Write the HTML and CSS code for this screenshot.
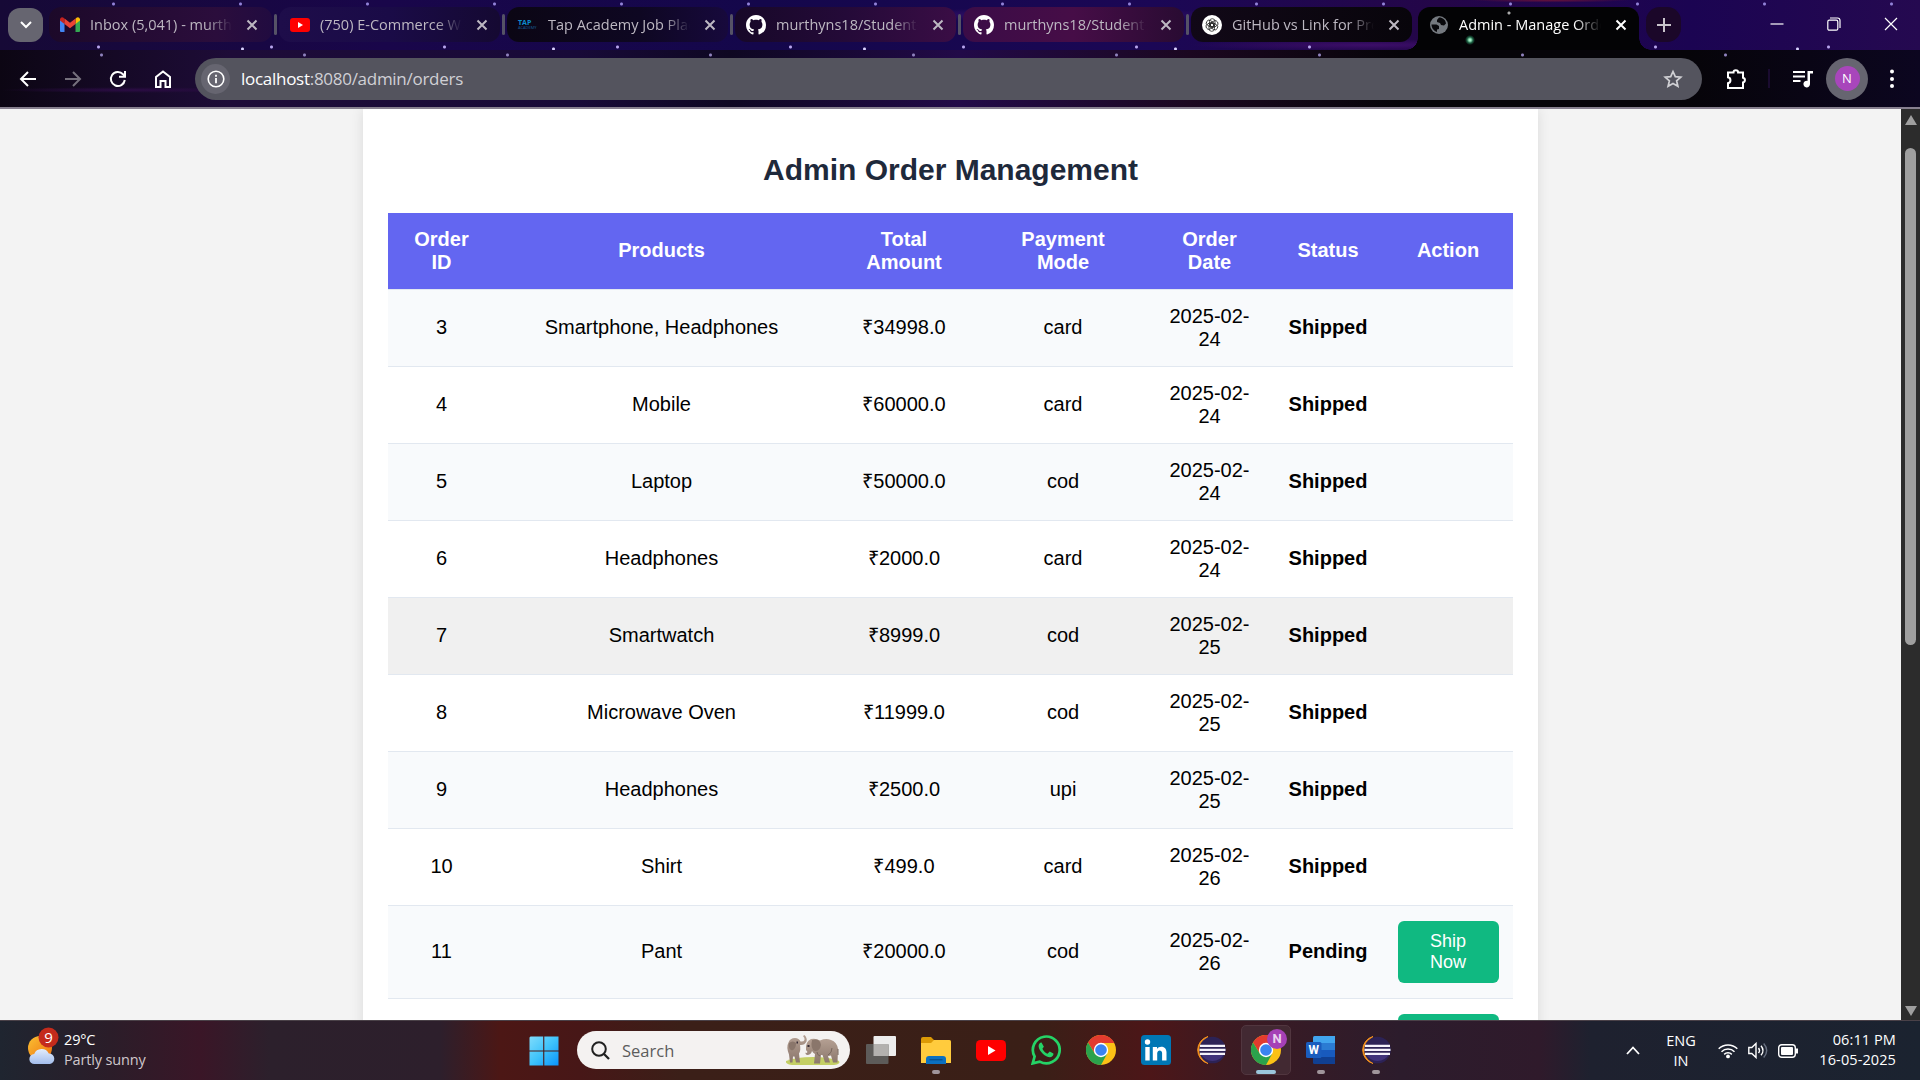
FILE: index.html
```html
<!DOCTYPE html>
<html lang="en">
<head>
<meta charset="utf-8">
<title>Admin - Manage Orders</title>
<link rel="stylesheet" href="styles.css">
</head>
<body>
<svg class="defs" width="0" height="0">
  <defs>
    <symbol id="x" viewBox="0 0 12 12"><path d="M1.500 1.500l9 9M10.500 1.500l-9 9" fill="none" stroke="currentColor" stroke-width="2"/></symbol>
    <symbol id="youtube" viewBox="0 0 30 21"><rect width="30" height="21" rx="4.500" fill="#f00"/><path d="M12 6v9l7.500-4.500z" fill="#fff"/></symbol>
    <symbol id="github" viewBox="0 0 16 16"><path fill="#fff" d="M8 0C3.580 0 0 3.580 0 8c0 3.540 2.290 6.530 5.470 7.590.4.070.55-.17.55-.38 0-.19-.01-.82-.01-1.490-2.010.37-2.530-.49-2.690-.94-.09-.23-.48-.94-.82-1.130-.28-.15-.68-.52-.01-.53.63-.01 1.080.58 1.230.82.72 1.210 1.870.87 2.330.66.070-.52.28-.87.510-1.070-1.780-.2-3.640-.89-3.640-3.950 0-.87.310-1.590.82-2.150-.08-.2-.36-1.020.08-2.120 0 0 .67-.21 2.200.82.64-.18 1.320-.27 2-.27s1.360.09 2 .27c1.530-1.040 2.200-.82 2.200-.82.44 1.100.16 1.920.08 2.120.51.56.82 1.270.82 2.150 0 3.070-1.870 3.750-3.650 3.950.29.25.54.73.54 1.480 0 1.070-.01 1.930-.01 2.200 0 .21.15.46.55.38A8.010 8.010 0 0 0 16 8c0-4.420-3.580-8-8-8z"/></symbol>
    <symbol id="chrome" viewBox="0 0 30 30"><circle cx="15" cy="15" r="15" fill="#fbc116"/><path d="M2 7.500A15 15 0 0 1 28.300 8H15L8.900 18.500z" fill="#e33b2e"/><path d="M2 7.500l6.900 11.250L21 19 15 30A15 15 0 0 1 2 7.500z" fill="#2ba24c"/><circle cx="15" cy="15" r="7.200" fill="#fff"/><circle cx="15" cy="15" r="5.800" fill="#3b83f0"/></symbol>
    <symbol id="eclipse" viewBox="0 0 30 30"><path d="M12 1.500A14 14 0 0 0 12 28.500 17 17 0 0 1 12 1.500z" fill="#f7941e" stroke="#f7941e" stroke-width="1"/><circle cx="16.500" cy="15" r="13.300" fill="#2c2255"/><path d="M5 19h23a13 13 0 0 1-23 0z" fill="#40337a"/><path d="M4 10.800h25M3.500 14.800h26M4 18.800h25" stroke="#f4f2fa" stroke-width="2.200"/></symbol>
  </defs>
</svg>

<header class="chrome">
  <div class="tabstrip">
    <button class="tab-search"><svg width="12" height="8" viewBox="0 0 12 8"><path d="M1 1l5 5 5-5" fill="none" stroke="#fff" stroke-width="2"/></svg></button>
    <div class="tab first"><span class="fav"><svg width="20" height="15" viewBox="0 0 20 15"><path d="M0 2.500V14q0 1 1 1h3.500V5.500z" fill="#4285f4"/><path d="M15.500 5.500V15H19q1 0 1-1V2.500z" fill="#34a853"/><path d="M15.500 1.800V7L20 3.500V2q-1.500-3.200-4.500-.2z" fill="#fbbc04"/><path d="M0 2v1.500L4.500 7V1.800Q1.500-1.200 0 2z" fill="#c5221f"/><path d="M4.500 1.600V7L10 11.200 15.500 7V1.600L10 5.800z" fill="#ea4335"/></svg></span><span class="tab-title">Inbox (5,041) - murthyns</span><svg class="close"><use href="#x"/></svg></div>
    <i class="sep"></i>
    <div class="tab blue"><span class="fav"><svg width="20" height="14"><use href="#youtube"/></svg></span><span class="tab-title">(750) E-Commerce Website</span><svg class="close"><use href="#x"/></svg></div>
    <i class="sep"></i>
    <div class="tab dark"><span class="fav tap"><b>TAP</b><small>ACADEMY</small></span><span class="tab-title">Tap Academy Job Placement</span><svg class="close"><use href="#x"/></svg></div>
    <i class="sep"></i>
    <div class="tab plum"><span class="fav"><svg width="20" height="20"><use href="#github"/></svg></span><span class="tab-title">murthyns18/Student-M</span><svg class="close"><use href="#x"/></svg></div>
    <i class="sep"></i>
    <div class="tab wine"><span class="fav"><svg width="20" height="20"><use href="#github"/></svg></span><span class="tab-title">murthyns18/Student-M</span><svg class="close"><use href="#x"/></svg></div>
    <i class="sep"></i>
    <div class="tab black"><span class="fav"><svg width="20" height="20" viewBox="0 0 20 20"><circle cx="10" cy="10" r="10" fill="#fff"/><g fill="none" stroke="#222" stroke-width=".8"><rect x="7.500" y="3.700" width="5.500" height="8" rx="2.700"/><rect x="7.500" y="3.700" width="5.500" height="8" rx="2.700" transform="rotate(60 10 10)"/><rect x="7.500" y="3.700" width="5.500" height="8" rx="2.700" transform="rotate(120 10 10)"/><rect x="7.500" y="3.700" width="5.500" height="8" rx="2.700" transform="rotate(180 10 10)"/><rect x="7.500" y="3.700" width="5.500" height="8" rx="2.700" transform="rotate(240 10 10)"/><rect x="7.500" y="3.700" width="5.500" height="8" rx="2.700" transform="rotate(300 10 10)"/></g></svg></span><span class="tab-title">GitHub vs Link for Project</span><svg class="close"><use href="#x"/></svg></div>
    <i class="sep none"></i>
    <div class="tab active"><span class="fav"><svg width="18" height="18" viewBox="0 0 18 18"><circle cx="9" cy="9" r="9" fill="#74797f"/><path d="M9 1.500L7 4v2l3 1 1 2 3 .5 2-2C15.500 4 13 1.500 9 1.500zM1.500 8.500h5L9 10v3l-2 .5V16C4 15 1.500 12 1.500 8.500z" fill="#08080b"/></svg></span><span class="tab-title">Admin - Manage Orders</span><svg class="close"><use href="#x"/></svg></div>
    <button class="new-tab"><svg width="14" height="14"><path d="M7 0v14M0 7h14" stroke="#c9c4cc" stroke-width="2"/></svg></button>
    <div class="window-buttons">
      <svg width="14" height="14"><path d="M.5 7h13" stroke="#fff" stroke-width="1.200"/></svg>
      <svg width="14" height="14" fill="none" stroke="#fff" stroke-width="1.200"><rect x=".8" y="3.200" width="10" height="10" rx="1.500"/><path d="M3 1h7.500q2.500 0 2.500 2.500V11"/></svg>
      <svg width="14" height="14"><path d="M1 1l12 12M13 1L1 13" stroke="#fff" stroke-width="1.200"/></svg>
    </div>
  </div>
  <div class="toolbar">
    <nav class="nav">
      <svg viewBox="0 0 18 18"><path d="M17 9H2M9 2L2 9l7 7" /></svg>
      <svg viewBox="0 0 18 18" class="dim"><path d="M1 9h15M9 2l7 7-7 7"/></svg>
      <svg viewBox="0 0 18 18"><path d="M15.800 10A7 7 0 1 1 14 4.200L15.500 6M16 1v5.800h-6"/></svg>
      <svg viewBox="0 0 18 18"><path d="M2 17V7l7-5.500L16 7v10h-4.500v-6h-5v6z"/></svg>
    </nav>
    <div class="address">
      <span class="info"><svg width="18" height="18" viewBox="0 0 18 18"><circle cx="9" cy="9" r="7.800" fill="none" stroke="#fff" stroke-width="1.600"/><path d="M9 8v5.200M9 4.800v1.900" stroke="#fff" stroke-width="1.800"/></svg></span>
      <span class="url"><span>localhost</span>:8080/admin/orders</span>
      <svg class="star" width="20" height="20" viewBox="0 0 20 20"><path d="M10 2.500l2.300 5.100 5.500.5-4.200 3.700 1.300 5.500L10 14.400l-4.900 2.900 1.300-5.500-4.200-3.700 5.500-.5z" fill="none" stroke="#d0d0d4" stroke-width="1.700"/></svg>
    </div>
    <div class="tools">
      <svg class="puzzle" width="22" height="22" viewBox="0 0 22 22"><path d="M2 4.500h5.500a2.300 2.300 0 0 1 4.600 0H17v5.200a2.400 2.400 0 0 1 0 4.700V20H2v-4.800a3 3 0 0 0 0-5.900z" fill="none" stroke="#fff" stroke-width="2"/></svg>
      <i class="rule"></i>
      <svg class="music" width="20" height="18" viewBox="0 0 20 18"><path d="M0 2h12M0 6.500h12M0 11h7.500" stroke="#fff" stroke-width="2"/><path d="M14.500 1H20v2.500h-3V14a3.300 3.300 0 1 1-2.500-3.100z" fill="#fff"/></svg>
      <span class="profile"><span>N</span></span>
      <svg class="kebab" width="6" height="20" fill="#fff"><circle cx="3" cy="2.500" r="2"/><circle cx="3" cy="10" r="2"/><circle cx="3" cy="17" r="2"/></svg>
    </div>
  </div>
</header>

<div class="viewport">
  <main class="page">
    <section class="container">
      <h2>Admin Order Management</h2>
      <table class="orders">
        <colgroup><col class="c-id"><col class="c-products"><col class="c-total"><col class="c-payment"><col class="c-date"><col class="c-status"><col class="c-action"></colgroup>
        <thead><tr><th>Order<br>ID</th><th class="single">Products</th><th>Total<br>Amount</th><th>Payment<br>Mode</th><th>Order<br>Date</th><th class="single">Status</th><th class="single">Action</th></tr></thead>
        <tbody>
          <tr><td>3</td><td>Smartphone, Headphones</td><td>₹34998.0</td><td>card</td><td class="date">2025-02-<br>24</td><td class="status">Shipped</td><td></td></tr>
          <tr><td>4</td><td>Mobile</td><td>₹60000.0</td><td>card</td><td class="date">2025-02-<br>24</td><td class="status">Shipped</td><td></td></tr>
          <tr><td>5</td><td>Laptop</td><td>₹50000.0</td><td>cod</td><td class="date">2025-02-<br>24</td><td class="status">Shipped</td><td></td></tr>
          <tr><td>6</td><td>Headphones</td><td>₹2000.0</td><td>card</td><td class="date">2025-02-<br>24</td><td class="status">Shipped</td><td></td></tr>
          <tr class="hovered"><td>7</td><td>Smartwatch</td><td>₹8999.0</td><td>cod</td><td class="date">2025-02-<br>25</td><td class="status">Shipped</td><td></td></tr>
          <tr><td>8</td><td>Microwave Oven</td><td>₹11999.0</td><td>cod</td><td class="date">2025-02-<br>25</td><td class="status">Shipped</td><td></td></tr>
          <tr><td>9</td><td>Headphones</td><td>₹2500.0</td><td>upi</td><td class="date">2025-02-<br>25</td><td class="status">Shipped</td><td></td></tr>
          <tr><td>10</td><td>Shirt</td><td>₹499.0</td><td>card</td><td class="date">2025-02-<br>26</td><td class="status">Shipped</td><td></td></tr>
          <tr><td>11</td><td>Pant</td><td>₹20000.0</td><td>cod</td><td class="date">2025-02-<br>26</td><td class="status">Pending</td><td class="action"><button class="ship">Ship<br>Now</button></td></tr>
          <tr><td></td><td></td><td></td><td></td><td></td><td></td><td class="action"><button class="ship"><br><br></button></td></tr>
        </tbody>
      </table>
    </section>
  </main>
  <div class="scrollbar"><i class="arrow up"></i><i class="thumb"></i><i class="arrow down"></i></div>
</div>

<footer class="taskbar">
  <div class="weather">
    <svg width="32" height="38" viewBox="0 0 32 38"><defs><linearGradient id="sun" x2="1" y2="1"><stop stop-color="#f9c133"/><stop offset="1" stop-color="#f0700f"/></linearGradient><linearGradient id="cloud" x2="0" y2="1"><stop stop-color="#e3edfb"/><stop offset="1" stop-color="#a3bdec"/></linearGradient></defs><circle cx="12" cy="21" r="12" fill="url(#sun)"/><path d="M6.500 37a5 5 0 0 1-.3-10 8 8 0 0 1 14.600-.5A5.300 5.300 0 0 1 22 37z" fill="url(#cloud)"/><circle cx="20.500" cy="10.500" r="10" fill="#c42b1c"/><text x="20.500" y="16" class="alert">9</text></svg>
    <div class="weather-text"><span>29°C</span><span class="muted">Partly sunny</span></div>
  </div>
  <div class="apps">
    <svg class="start" width="30" height="30" viewBox="0 0 30 30"><defs><linearGradient id="win" x2="1" y2="1"><stop stop-color="#7fdcfb"/><stop offset=".5" stop-color="#3fc3fb"/><stop offset="1" stop-color="#0a93fb"/></linearGradient></defs><path d="M1.500.5h12.700v14H.5V1.500zM15.300.5h14.200v14H15.300zM.5 15.500h13.700v14H.5zM15.300 15.500h14.200v14H15.300z" fill="url(#win)"/></svg>
    <div class="search">
      <svg width="19" height="19" viewBox="0 0 19 19"><circle cx="8" cy="8" r="6.800" fill="none" stroke="#202020" stroke-width="2"/><path d="M13 13l5 5" stroke="#202020" stroke-width="2.300"/></svg>
      <span>Search</span>
      <svg class="elephants" width="56" height="32" viewBox="0 0 56 32"><defs><linearGradient id="hide" x2="0" y2="1"><stop stop-color="#b5a093"/><stop offset="1" stop-color="#8b776c"/></linearGradient></defs><path d="M1 27q10-4 27-4t26 4q2 3-5 4H7q-7-1-6-4z" fill="#c4cf65"/><path d="M5 28.500l-1-8Q1 13 3.500 8.500 5 4 10 4q4 0 5.500 3.500 3 .5 4-1.500.5-2-1.500-4l1.500-1q3 3 2 6.500-2 4-6.500 3.500 1 5-1 8.500l1 9h-4l-1.500-6h-1.500l-.5 6z" fill="url(#hide)"/><path d="M4 9q4-3 7 0 0 6-4 7.500Q3 15 4 9z" fill="#8a766b"/><path d="M21 16q-1-8 5-11 5-1 9 1.500Q41 4 46 6q6 2 7 9l-.5 13.500H48l-2-7-3 .5 2 6.500h-5L37.500 21H36l-1 8.500h-6L30 20q-2-1-3-3-1 4-5 4-2-1-1.500-2.500 1 1 2-.5z" fill="url(#hide)"/><path d="M27 6q8-2 9 5-1 6-6 6-5-2-3-11z" fill="#8a766b"/><path d="M43 21q4-2 4-7M35 22q-3-1-3-4M53 15v6" stroke="#77665c" fill="none"/><path d="M11.500 7.500H13v2h-1.500zM22.500 11h2v2h-2z" fill="#352b35"/></svg>
    </div>
    <div class="app task-view"><svg width="30" height="28"><rect x="7.500" width="22.500" height="20" rx="1" fill="#ededed"/><rect y="8" width="22.500" height="20" rx="1" fill="#5d5b59"/><path d="M7.500 8h15v12h-15z" fill="#b3b1af"/></svg></div>
    <div class="app"><svg width="30" height="27"><path d="M0 2q0-2 2-2h8l3 3h15q2 0 2 2v5H0z" fill="#dc9a06"/><path d="M0 6h10l3-3h15q2 0 2 2v21H0z" fill="#ffcb3d"/><path d="M5 27v-5q0-3 3-3h14q3 0 3 3v5z" fill="#0b70c0"/><path d="M8.500 22.800h13" stroke="#05477f"/></svg><i class="dot"></i></div>
    <div class="app"><svg width="30" height="21"><use href="#youtube"/></svg></div>
    <div class="app"><svg width="30" height="30" viewBox="0 0 30 30"><path d="M1.700 28.400l1.900-6.900A13.400 13.400 0 1 1 8.700 26.600z" fill="none" stroke="#25d366" stroke-width="2.700"/><path d="M10.500 7.500c-1-.3-3 1.200-2.900 3.700.4 5.500 7.500 11.300 11.500 11 2.500-.2 3.600-2 3.300-3.600l-3.700-2-2.200 2.100c-2-.6-4.300-2.700-5.100-4.900l1.500-2z" fill="#25d366"/></svg></div>
    <div class="app"><svg width="30" height="30"><use href="#chrome"/></svg></div>
    <div class="app"><svg width="30" height="30"><rect width="30" height="30" rx="3.500" fill="#0077b5"/><circle cx="6.500" cy="7" r="2.700" fill="#fff"/><path d="M4.300 12h4.400v13.500H4.300zM11.800 12H16v1.900c2-3.300 9.500-3.200 9.500 3.400v8.200h-4.400v-7.200c0-4-4.900-3.700-4.900 0v7.200h-4.400z" fill="#fff"/></svg></div>
    <div class="app eclipse"><svg width="30" height="30"><use href="#eclipse"/></svg></div>
    <div class="app current"><svg width="30" height="30"><use href="#chrome"/></svg><b class="badge">N</b><i class="dot"></i></div>
    <div class="app"><svg width="30" height="28"><path d="M7 1.500Q7 0 8.500 0H29v7H7z" fill="#41a5ee"/><path d="M7 7h22v7H7z" fill="#2b7cd3"/><path d="M7 14h22v7H7z" fill="#185abd"/><path d="M7 21h22v7H8.500Q7 28 7 26.500z" fill="#103f91"/><rect y="6" width="15.500" height="16" rx="1.500" fill="#1a5dbe"/><text x="7.700" y="18" class="word">W</text></svg><i class="dot"></i></div>
    <div class="app eclipse"><svg width="30" height="30"><use href="#eclipse"/></svg><i class="dot"></i></div>
  </div>
  <div class="tray">
    <svg class="chevron" width="14" height="9"><path d="M1 8l6-6.500L13 8" fill="none" stroke="#fff" stroke-width="1.800"/></svg>
    <div class="lang"><span>ENG</span><span>IN</span></div>
    <svg class="wifi" width="20" height="16" viewBox="0 0 20 16"><g fill="none" stroke="#fff" stroke-width="1.500"><path d="M.7 5.800a13.200 13.200 0 0 1 18.600 0M3.500 8.700a9.200 9.200 0 0 1 13 0M6.200 11.400a5.400 5.400 0 0 1 7.600 0"/></g><circle cx="10" cy="13.400" r="1.900" fill="#fff"/></svg>
    <svg class="sound" width="20" height="17" viewBox="0 0 20 17" fill="none" stroke="#fff" stroke-width="1.400"><path d="M.8 5.500h3L8 1.500v14l-4.200-4h-3z"/><path d="M10.500 6q2 2.500 0 5M13 3.700q4 4.800 0 9.600"/><path d="M15.700 1.500q6 7 0 14" stroke="#687080"/></svg>
    <svg class="battery" width="21" height="14"><rect x=".7" y=".7" width="16.600" height="12.600" rx="3" fill="none" stroke="#fff" stroke-width="1.400"/><rect x="3" y="3" width="12" height="8" rx="1" fill="#fff"/><path d="M18 4.500h2v5h-2z" fill="#fff"/></svg>
    <div class="clock"><span>06:11 PM</span><span>16-05-2025</span></div>
  </div>
</footer>
</body>
</html>
```
FILE: styles.css
```css
* { box-sizing: border-box; }
body {
  margin: 0;
  width: 1920px;
  height: 1080px;
  overflow: hidden;
  display: flex;
  flex-direction: column;
  font-family: "Open Sans", "Noto Sans", sans-serif;
}
svg { display: block; flex: none; }
.defs { position: absolute; }
button { border: 0; padding: 0; font: inherit; }

/* Browser frame */
.chrome { height: 109px; flex: none; border-bottom: 2px solid #87808f; }
.tabstrip {
  height: 50px;
  padding: 7px 0 0 8px;
  display: flex;
  background:
    radial-gradient(circle, #d9d2ff 0 1px, transparent 2px) 87px 4px / 311px 90px,
    radial-gradient(circle, #b7a5ee 0 1px, transparent 2px) 12px 1px / 173px 92px,
    radial-gradient(circle, #9182d8 0 1px, transparent 2px) 50px -38px / 127px 84px,
    radial-gradient(ellipse at 1550px 0, #6b1238 0, transparent 80px),
    radial-gradient(ellipse at 1370px 45px, #3c0e68 0, transparent 180px),
    radial-gradient(ellipse at 1050px 15px, #35106a 0, transparent 200px),
    linear-gradient(90deg, #160936, #19064a 20%, #14074b 40%, #1b0755 60%, #240648 75%, #1b0452 88%, #250950);
}
.tab-search {
  width: 35px; height: 34px; margin: 1px 6px 0 0;
  border-radius: 12px; background: #666570;
  display: flex; align-items: center; justify-content: center;
}
.tab {
  width: 221px; height: 35px; padding: 0 12px 0 11px;
  border-radius: 12px;
  display: flex; align-items: center;
  background: linear-gradient(90deg, #1c0929, #2b0d3c 75%, #210b40);
  color: #bdb8c2;
}
.tab.first { width: 223px; }
.tab.blue { background: linear-gradient(90deg, #1e0d4a, #1a0b47 50%, #150932); }
.tab.dark { background: linear-gradient(90deg, #0b0614, #0e0722 60%, #17093c); }
.tab.plum { background: linear-gradient(90deg, #170828, #240a38 50%, #3a0d45); }
.tab.wine { background: linear-gradient(90deg, #3b0c47, #460d47 50%, #290b32); }
.tab.black { background: linear-gradient(90deg, #110817, #08050b); }
.tab.active {
  position: relative;
  height: 43px; padding-bottom: 8px;
  border-radius: 12px 12px 0 0;
  color: #fff;
  background:
    radial-gradient(circle at 52px 33px, #a1f0c5 0 1px, #1c5e42 3px, transparent 5px),
    radial-gradient(circle at 91px 6px, #aaa 0 1px, transparent 2px),
    #030305;
}
.tab.active::before, .tab.active::after {
  content: ""; position: absolute; bottom: 0; width: 12px; height: 12px;
}
.tab.active::before { left: -12px; background: radial-gradient(circle at 0 0, transparent 11.500px, #030305 12px); }
.tab.active::after { right: -12px; background: radial-gradient(circle at 100% 0, transparent 11.500px, #030305 12px); }
.fav { width: 20px; height: 20px; margin-right: 10px; flex: none; display: flex; flex-direction: column; align-items: center; justify-content: center; }
.tap { align-items: flex-start; line-height: 5px; font-size: 7px; color: #0d8ecf; }
.tap small { font-size: 4px; color: #17609a; }
.tab-title {
  width: 142px; flex: none; overflow: hidden; white-space: nowrap;
  font-size: 14.500px; line-height: 22px;
  -webkit-mask-image: linear-gradient(90deg, #000 116px, transparent 142px);
  mask-image: linear-gradient(90deg, #000 116px, transparent 142px);
}
.close { width: 12px; height: 12px; margin-left: 14px; }
.sep { width: 3px; height: 21px; margin: 7px 2px 0; border-radius: 2px; background: #555266; }
.sep.none { width: 2px; background: none; }
.new-tab {
  width: 35px; height: 35px; margin-left: 7px; border-radius: 14px;
  background: #1b0729; display: flex; align-items: center; justify-content: center;
}
.window-buttons { margin: 10px 22px 0 auto; display: flex; gap: 43px; }

.toolbar {
  height: 57px;
  display: flex; align-items: center;
  background:
    radial-gradient(circle, #8f82bd 0 1px, transparent 2px) 0 -42px / 203px 94px,
    radial-gradient(ellipse at 850px 28px, #591585 0, transparent 150px),
    radial-gradient(ellipse at 1040px 28px, #490c45 0, transparent 200px),
    radial-gradient(ellipse at 130px 40px, #2c0c45 0, transparent 130px),
    linear-gradient(90deg, #0c0613, #1e0c38 12%, #180a38 30%, #0e0722 38%, #220a48 50%, #1b0720 62%, #060409 73%, #060409 88%, #0c0620);
}
.nav { display: flex; gap: 27px; padding-left: 19px; }
.nav svg { width: 18px; height: 18px; fill: none; stroke: #fff; stroke-width: 2; }
.nav .dim { opacity: .42; }
.address {
  margin-left: 23px; width: 1507px; height: 42px; padding: 0 19px 0 6px;
  border-radius: 21px; background: #54545e;
  display: flex; align-items: center;
}
.info { width: 29px; height: 30px; margin-right: 11px; border-radius: 50%; background: #666570; display: flex; align-items: center; justify-content: center; }
.url { font-size: 17px; color: #d0d0d5; letter-spacing: -.28px; }
.url span { color: #fff; }
.star { margin-left: auto; }
.tools { flex: 1; display: flex; align-items: center; padding-left: 24px; }
.rule { width: 2px; height: 19px; margin: 0 23px 0 20px; background: #1a0b30; }
.profile {
  width: 42px; height: 42px; margin: 0 21px 0 13px; border-radius: 50%; background: #666570;
  display: flex; align-items: center; justify-content: center;
}
.profile span { width: 25px; height: 25px; border-radius: 50%; background: #a846bb; color: #fff; font-size: 13px; line-height: 25px; text-align: center; }

/* Page */
.viewport { height: 911px; flex: none; display: flex; overflow: hidden; }
.page { flex: 1; background: #f3f3f3; padding-left: 363px; font-family: "Liberation Sans", Arial, sans-serif; font-size: 20px; line-height: 23px; }
.container { width: 1175px; height: 1000px; padding: 44px 25px 0; background: #fff; box-shadow: 0 0 12px rgba(0, 0, 0, .1); }
h2 { margin: 0 0 26px; font-size: 30px; line-height: 34px; text-align: center; color: #1e293b; }
.orders { width: 1125px; table-layout: fixed; border-spacing: 0; text-align: center; }
.c-id { width: 107px; } .c-products { width: 333px; } .c-total { width: 152px; } .c-payment { width: 166px; }
.c-date { width: 127px; } .c-status { width: 110px; } .c-action { width: 130px; }
.orders th, .orders td { padding: 15px 0; border-bottom: 1px solid #e2e8f0; }
.orders th { background: #6366f1; color: #fff; }
.orders td, .orders th.single { padding: 14px 0 16px; }
.orders td.date, .orders td.action { padding: 15px 0; }
tbody tr:nth-child(odd) { background: #f8fafc; }
tbody .hovered:nth-child(odd) { background: #f0f0f0; }
.status { font-weight: bold; }
.ship {
  display: block; width: 101px; height: 62px; margin: 0 auto; border-radius: 6px;
  background: #10b981; color: #fff; font-size: 18px; line-height: 21px;
}
.scrollbar { width: 19px; background: #2c2c2c; display: flex; flex-direction: column; align-items: center; padding: 6px 0 4px; }
.arrow { border: 6px solid transparent; }
.up { border-top: 0; border-bottom: 10px solid #9f9f9f; }
.down { margin-top: auto; border-bottom: 0; border-top: 10px solid #9f9f9f; }
.thumb { width: 11px; height: 497px; margin-top: 23px; border-radius: 6px; background: #9f9f9f; }

/* Taskbar */
.taskbar {
  height: 60px; display: flex; border-top: 1px solid #4a4148; color: #fff; font-size: 14.500px; line-height: 20px;
  background: linear-gradient(90deg, #1f2530 0, #2b1d29 110px, #3a1627 200px, #2c202c 270px, #2d1f2c 440px, #4c1715 500px, #471717 580px, #3b1f18 680px, #3a1f17 1040px, #4c1618 1150px, #3c1a22 1230px, #2c1c2c 1400px, #2f1a2b 1540px, #1e212f 1590px, #1b2330 1920px);
}
.weather { width: 529px; padding-left: 28px; display: flex; }
.weather svg { margin: 6px 4px 0 0; }
.weather-text { padding-top: 9px; display: flex; flex-direction: column; letter-spacing: -.15px; }
.muted { color: #cfc8cc; }
.alert { font-size: 15px; fill: #fff; text-anchor: middle; }
.apps { display: flex; align-items: flex-start; }
.start { margin: 15px 18px 0 0; }
.search {
  width: 273px; height: 38px; margin: 10px 6px 0 0; padding: 0 9px 0 14px; border-radius: 19px;
  background: #f4f2f1; color: #5c5c5c; font-size: 16.500px;
  display: flex; align-items: center; gap: 12px;
}
.search span { position: relative; top: 1px; }
.elephants { margin-left: auto; }
.app { position: relative; width: 50px; height: 50px; margin: 4px 5px 0 0; display: flex; align-items: center; justify-content: center; border-radius: 5px; }
.eclipse { padding-right: 1px; }
.current { background: #422932; border: 1px solid #51363f; }
.badge { position: absolute; right: 3px; top: 3px; width: 20px; height: 20px; border-radius: 50%; background: #a540b6; color: #ead2ee; font: bold 13px/20px Roboto, sans-serif; text-align: center; }
.dot { position: absolute; left: 21px; bottom: 1px; width: 8px; height: 4px; border-radius: 2px; background: #a0959b; }
.current .dot { left: 14px; bottom: 0; width: 20px; background: #9bc6dc; }
.word { font: bold 12px Roboto, sans-serif; fill: #fff; text-anchor: middle; }
.tray { margin-left: auto; padding-right: 24px; display: flex; align-items: center; }
.lang, .clock { display: flex; flex-direction: column; }
.lang { width: 34px; margin: 0 20px 0 24px; text-align: center; }
.wifi { margin-right: 10px; }
.sound { margin-right: 10px; }
.clock { width: 97px; padding-bottom: 2px; text-align: right; letter-spacing: .1px; }
```
